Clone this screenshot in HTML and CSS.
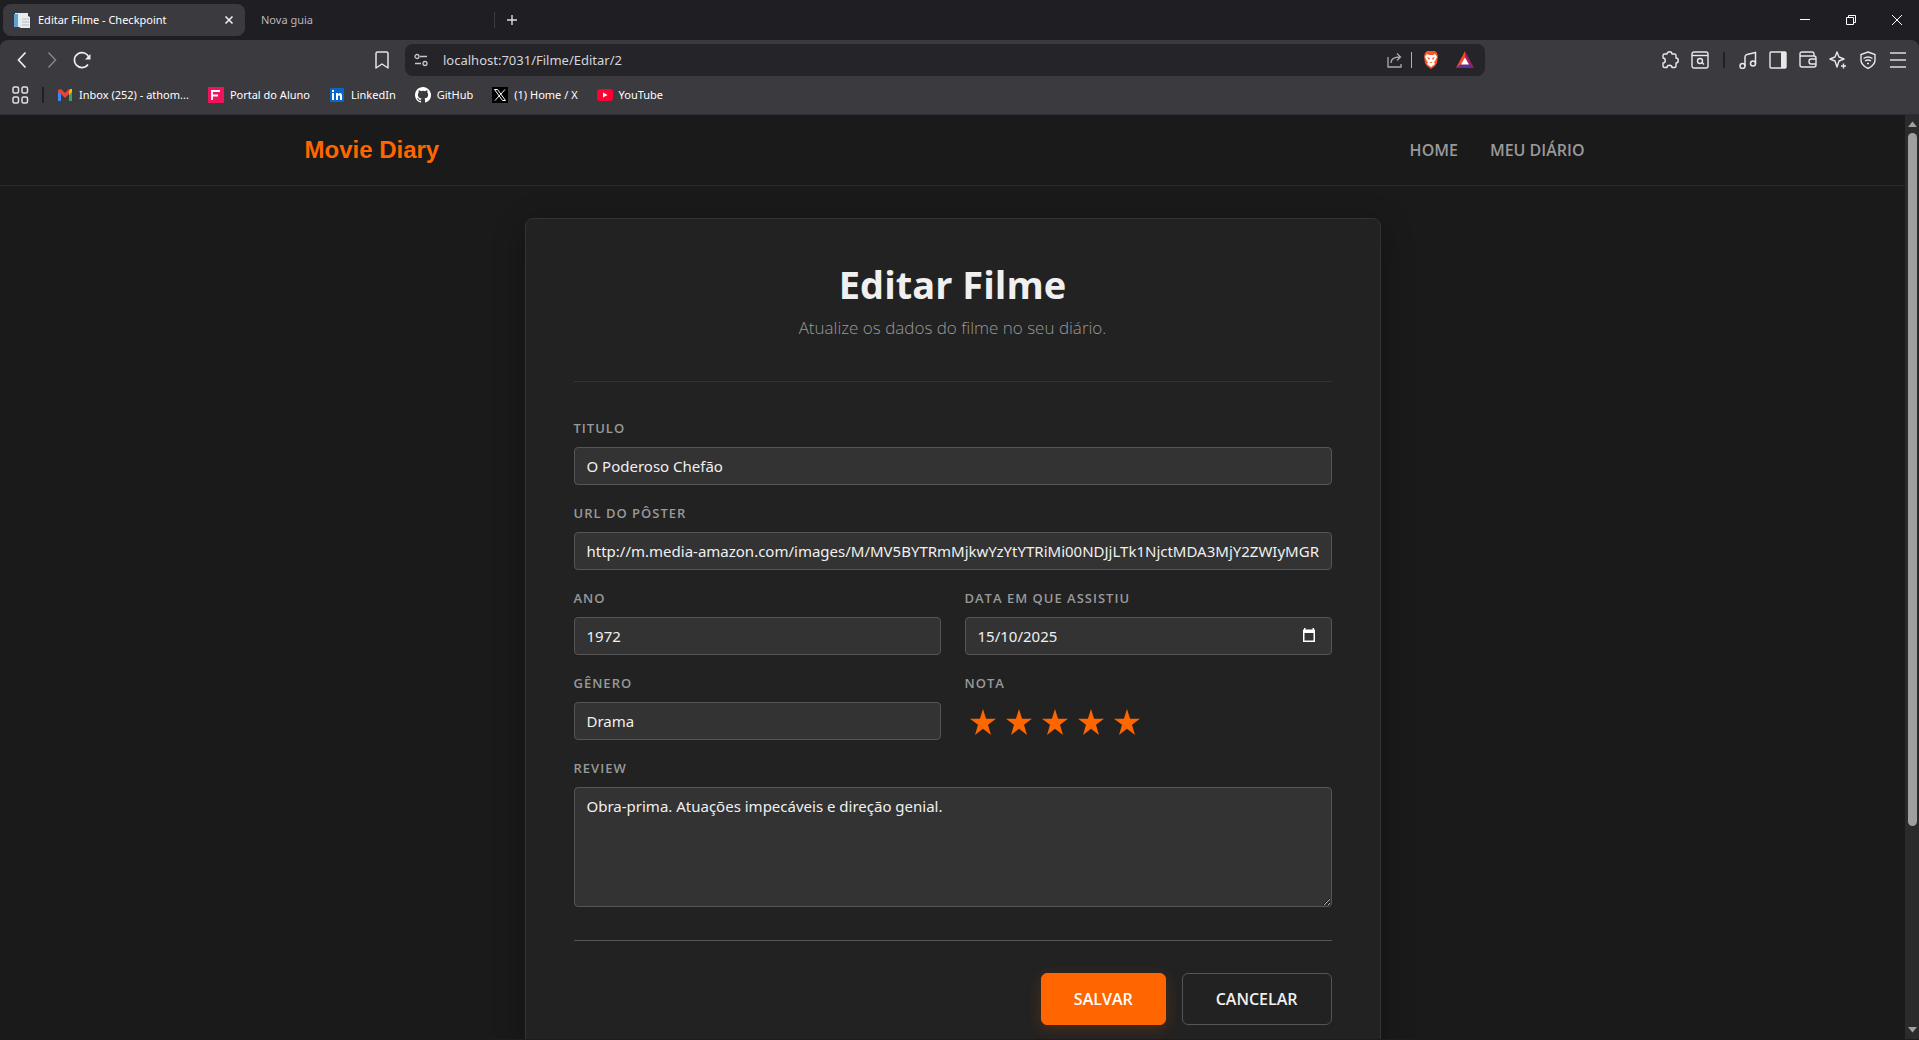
FILE: index.html
```html
<!DOCTYPE html>
<html lang="pt-BR">
<head>
<meta charset="utf-8">
<title>Editar Filme - Checkpoint</title>
<link rel="stylesheet" href="styles.css">
</head>
<body>
<div class="browser">
  <div class="tabstrip">
    <div class="tab tab-active">
      <svg class="icon16" viewBox="0 0 16 16"><path d="M1 1h9v14H1z" fill="#dfe9f2"/><path d="M0 2h4v13H0z" fill="#5fa3d3"/><path d="M5 1h9v3l2 1v11H7l-2-1z" fill="#e9ecef"/><path d="M8 7h7M8 10h7M8 13h7" stroke="#b6bec6"/></svg>
      <span class="tab-title">Editar Filme - Checkpoint</span>
      <button class="bare" aria-label="Fechar guia"><svg class="icon16" viewBox="0 0 16 16"><path d="M4.500 4.500l7 7M11.500 4.500l-7 7" stroke="#eee" stroke-width="1.600"/></svg></button>
    </div>
    <div class="tab tab-idle"><span class="tab-title">Nova guia</span></div>
    <button class="bare new-tab" aria-label="Nova guia"><svg class="icon16" viewBox="0 0 16 16"><path d="M8 3v10M3 8h10" stroke="#ddd" stroke-width="1.400"/></svg></button>
    <div class="window-controls">
      <button class="bare" aria-label="Minimizar"><svg class="icon16" viewBox="0 0 16 16"><path d="M3 7.500h10" stroke="#fff"/></svg></button>
      <button class="bare" aria-label="Restaurar"><svg class="icon16" viewBox="0 0 16 16" fill="none" stroke="#fff"><path d="M3.500 5.500h7v7h-7zM5.500 5.500v-2h7v7h-2"/></svg></button>
      <button class="bare" aria-label="Fechar"><svg class="icon16" viewBox="0 0 16 16"><path d="M3 3l10 10M13 3L3 13" stroke="#fff"/></svg></button>
    </div>
  </div>
  <div class="toolbar">
    <div class="nav-buttons">
      <button class="bare" aria-label="Voltar"><svg class="icon18" viewBox="0 0 18 18" fill="none" stroke="#eee" stroke-width="1.700"><path d="M12.500 1.500L5.500 9l7 7.500"/></svg></button>
      <button class="bare" aria-label="Avançar"><svg class="icon18" viewBox="0 0 18 18" fill="none" stroke="#858489" stroke-width="1.500"><path d="M5.500 1.500l7 7.500-7 7.500"/></svg></button>
      <button class="bare" aria-label="Recarregar"><svg class="icon18" viewBox="0 0 18 18" fill="none" stroke="#eee" stroke-width="1.700"><path d="M15 13.500A7.500 7.500 0 1 1 16 6.500"/><path d="M17.500 3v5.500H12z" fill="#eee" stroke="none"/></svg></button>
    </div>
    <div class="location">
      <button class="bare" aria-label="Favoritar"><svg class="icon18" viewBox="0 0 18 18" fill="none" stroke="#e5e5e8" stroke-width="1.500" stroke-linejoin="round"><path d="M3 2.500Q3 1 4.500 1h9Q15 1 15 2.500V17l-6-4-6 4z"/></svg></button>
      <div class="address">
        <svg class="icon16" viewBox="0 0 16 16" fill="none" stroke="#c5c5ca" stroke-width="1.300"><circle cx="4" cy="4.500" r="2"/><path d="M7 4.500h7M2 11.500h6"/><circle cx="12" cy="11.500" r="2"/></svg>
        <input class="url" type="text" aria-label="Endereço" value="localhost:7031/Filme/Editar/2">
        <svg class="icon16 share" viewBox="0 0 16 16" fill="none" stroke="#aaaab0" stroke-width="1.300"><path d="M1 5v10h13v-3M4 11c0-4 3-6 9-6M10 1.500L13.500 5 10 8.500"/></svg>
        <span class="address-rule"></span>
        <svg class="icon18 brave" viewBox="0 0 18 18"><path d="M5 0h8l2 2 1 3-1 7-2 3-4 3-4-3-2-3-1-7 1-3z" fill="#fb542b"/><path d="M5 3l2 1h4l2-1 2 3-2 4-1 1 1 2-4 3-4-3 1-2-1-1-2-4z" fill="#fff"/><path d="M5 6l3 1-1 2zM13 6l-3 1 1 2zM7 11h4l-2 1z" fill="#fb542b"/></svg>
        <svg class="icon18" viewBox="0 0 18 18"><path d="M9 0L0 17l5-3 4-7z" fill="#ff4724"/><path d="M9 0l9 17-5-3-4-7z" fill="#9e1f63"/><path d="M0 17h18l-5-4H5z" fill="#662d91"/><path d="M9 6.500L5 13.500h8z" fill="#fff"/></svg>
      </div>
    </div>
    <div class="tools">
      <button class="bare" aria-label="Extensões"><svg class="icon18" viewBox="0 0 18 18" fill="none" stroke="#e8e8ea" stroke-width="1.400" stroke-linejoin="round"><path d="M3.500 3H6c0-3 5-3 5 0h2.500q1.500 0 1.500 1.500V7c3 0 3 5 0 5v3q0 1.500-1.500 1.500H11c0-3-5-3-5 0H3.500Q2 16.500 2 15v-3c3 0 3-5 0-5V4.500Q2 3 3.500 3z"/></svg></button>
      <button class="bare" aria-label="Pesquisar guias"><svg class="icon18" viewBox="0 0 18 18" fill="none" stroke="#e8e8ea" stroke-width="1.400"><rect x="1" y="1" width="16" height="16" rx="2"/><path d="M1 4.500h16"/><circle cx="9" cy="10" r="2.500"/><path d="M11 11.500l2 2"/></svg></button>
      <span class="tool-rule"></span>
      <button class="bare" aria-label="Mídia"><svg class="icon18" viewBox="0 0 18 18" fill="none" stroke="#e8e8ea" stroke-width="1.500"><circle cx="3.500" cy="15" r="2.500"/><circle cx="14" cy="12.500" r="2.500"/><path d="M6 15V6q0-2 2-2.500l8.500-2v11"/></svg></button>
      <button class="bare" aria-label="Barra lateral"><svg class="icon18" viewBox="0 0 18 18"><rect x="1" y="1" width="16" height="16" rx="1" fill="none" stroke="#e8e8ea" stroke-width="1.400"/><path d="M12 1h5v16h-5z" fill="#e8e8ea"/></svg></button>
      <button class="bare" aria-label="Carteira"><svg class="icon18" viewBox="0 0 18 18" fill="none" stroke="#e8e8ea" stroke-width="1.400"><path d="M15 5V3q0-2-2-2H3Q1 1 1 3v11q0 2 2 2h12q2 0 2-2V7q0-2-2-2H1M17 8h-5q-2 0-2 2.500T12 13h5z"/></svg></button>
      <button class="bare" aria-label="Leo"><svg class="icon18" viewBox="0 0 18 18" fill="none" stroke="#e8e8ea" stroke-width="1.400" stroke-linejoin="round"><path d="M8 1l2 5 5 2-5 2-2 6-2-6-5-2 5-2z"/><path d="M14.500 12.500v5M12 15h5"/></svg></button>
      <button class="bare" aria-label="VPN"><svg class="icon18" viewBox="0 0 18 18" fill="none" stroke="#e8e8ea" stroke-width="1.400"><path d="M9 1l7 2.500V9c0 4-3 6.500-7 8.500C5 15.500 2 13 2 9V3.500z"/><path d="M4.500 7.500q4.500-3 9 0M6 10q3-2 6 0M8 12.500h2"/></svg></button>
      <button class="bare" aria-label="Menu"><svg class="icon18" viewBox="0 0 18 18" stroke="#b4b4b8" stroke-width="2"><path d="M1 2h16M1 9h16M1 16h16"/></svg></button>
    </div>
  </div>
  <div class="bookmarks">
    <button class="bare" aria-label="Grupos de guias"><svg class="icon18" viewBox="0 0 18 18" fill="none" stroke="#e0e0e3" stroke-width="1.500"><rect x="2" y="1" width="5.500" height="6" rx="1.500"/><rect x="11" y="1" width="5.500" height="6" rx="1.500"/><rect x="2" y="11" width="5.500" height="6" rx="1.500"/><rect x="11" y="11" width="5.500" height="6" rx="1.500"/></svg></button>
    <span class="bookmark-rule"></span>
    <a class="bookmark" href="#"><svg class="icon16" viewBox="0 0 16 16"><path d="M1 4v10h3V7z" fill="#4285f4"/><path d="M12 7v7h3V4z" fill="#34a853"/><path d="M1 3l3-1 4 4 4-4v5l-4 4-4-4-3-2z" fill="#ea4335"/><path d="M12 4l1-2h2v3l-3 3z" fill="#fbbc04"/></svg>Inbox (252) - athom...</a>
    <a class="bookmark" href="#"><svg class="icon16" viewBox="0 0 16 16"><path d="M0 0h16v16H0z" fill="#ed145b"/><path d="M4 13V4h8M4 8.500h6" fill="none" stroke="#fff" stroke-width="1.800"/></svg>Portal do Aluno</a>
    <a class="bookmark" href="#"><svg class="icon16" viewBox="0 0 16 16"><rect x="1" y="1" width="14" height="14" rx="1" fill="#0a66c2"/><path d="M3 6h2v7H3zM3 3h2v2H3zM7 6h2v1q4-2.500 4 2v4h-2V9q-2-2-2 1v3H7z" fill="#fff"/></svg>LinkedIn</a>
    <a class="bookmark" href="#"><svg class="icon16" viewBox="0 0 16 16"><path fill="#fff" d="M8 0C3.580 0 0 3.580 0 8c0 3.540 2.290 6.530 5.470 7.590.4.070.55-.17.55-.38v-1.490c-2.010.37-2.530-.49-2.690-.94-.09-.23-.48-.94-.82-1.130-.28-.15-.68-.52-.01-.53.63-.01 1.080.58 1.230.82.72 1.210 1.870.87 2.330.66.07-.52.28-.87.51-1.070-1.780-.2-3.640-.89-3.640-3.950 0-.87.31-1.590.82-2.150-.08-.2-.36-1.020.08-2.120 0 0 .67-.21 2.200.82a7.600 7.600 0 0 1 4 0c1.530-1.040 2.200-.82 2.200-.82.44 1.100.16 1.920.08 2.120.51.56.82 1.270.82 2.150 0 3.070-1.870 3.750-3.650 3.950.29.25.54.73.54 1.480v2.200c0 .21.15.46.55.38A8 8 0 0 0 8 0z"/></svg>GitHub</a>
    <a class="bookmark" href="#"><svg class="icon16" viewBox="0 0 16 16"><path d="M0 0h16v16H0z" fill="#000"/><path d="M2.500 2.500h3l8 11h-3zM13 2.500l-10 11" fill="none" stroke="#fff"/></svg>(1) Home / X</a>
    <a class="bookmark" href="#"><svg class="icon16" viewBox="0 0 16 16"><rect y="2" width="16" height="12" rx="3" fill="#f03"/><path d="M6 5.500v5L10.500 8z" fill="#fff"/></svg>YouTube</a>
  </div>

  <div class="viewport">
    <div class="page">
      <header class="site-header">
        <nav class="container site-nav">
          <a class="brand" href="#">Movie Diary</a>
          <div class="links"><a href="#">HOME</a><a href="#">MEU DIÁRIO</a></div>
        </nav>
      </header>
      <main class="container">
        <section class="card">
          <div class="card-head">
            <h1>Editar Filme</h1>
            <p>Atualize os dados do filme no seu diário.</p>
          </div>
          <form class="form">
            <div class="field wide"><label for="titulo">TITULO</label><input id="titulo" type="text" value="O Poderoso Chefão"></div>
            <div class="field wide"><label for="poster">URL DO PÔSTER</label><input id="poster" type="text" value="http://m.media-amazon.com/images/M/MV5BYTRmMjkwYzYtYTRiMi00NDJjLTk1NjctMDA3MjY2ZWIyMGRkXkEyXkFqcGc@._V1_.jpg"></div>
            <div class="field"><label for="ano">ANO</label><input id="ano" type="text" value="1972"></div>
            <div class="field"><label for="data">DATA EM QUE ASSISTIU</label>
              <div class="date-box"><input id="data" type="text" value="15/10/2025"><button class="bare" type="button" aria-label="Abrir calendário"><svg class="icon16" viewBox="0 0 16 16"><path fill="#fff" d="M3 1h1.500v1.500h7V1H13v1.500h1V15H2V2.500h1zM3.500 6v7.500h9V6z"/></svg></button></div>
            </div>
            <div class="field"><label for="genero">GÊNERO</label><input id="genero" type="text" value="Drama"></div>
            <fieldset class="field rating"><legend>NOTA</legend>
              <div class="stars">
                <label class="star"><input type="radio" name="nota" value="1" aria-label="1 estrela"><svg viewBox="0 0 26 26"><path d="M13 0l3.100 9.800H26l-8 6L21 26l-8-6.200L5 26l3-10.200-8-6h9.900z"/></svg></label>
                <label class="star"><input type="radio" name="nota" value="2" aria-label="2 estrelas"><svg viewBox="0 0 26 26"><path d="M13 0l3.100 9.800H26l-8 6L21 26l-8-6.200L5 26l3-10.200-8-6h9.900z"/></svg></label>
                <label class="star"><input type="radio" name="nota" value="3" aria-label="3 estrelas"><svg viewBox="0 0 26 26"><path d="M13 0l3.100 9.800H26l-8 6L21 26l-8-6.200L5 26l3-10.200-8-6h9.900z"/></svg></label>
                <label class="star"><input type="radio" name="nota" value="4" aria-label="4 estrelas"><svg viewBox="0 0 26 26"><path d="M13 0l3.100 9.800H26l-8 6L21 26l-8-6.200L5 26l3-10.200-8-6h9.900z"/></svg></label>
                <label class="star"><input type="radio" name="nota" value="5" aria-label="5 estrelas" checked><svg viewBox="0 0 26 26"><path d="M13 0l3.100 9.800H26l-8 6L21 26l-8-6.200L5 26l3-10.200-8-6h9.900z"/></svg></label>
              </div>
            </fieldset>
            <div class="field wide"><label for="review">REVIEW</label><textarea id="review">Obra-prima. Atuações impecáveis e direção genial.</textarea></div>
            <div class="actions wide"><button class="btn btn-primary" type="button">SALVAR</button><button class="btn btn-outline" type="button">CANCELAR</button></div>
          </form>
        </section>
      </main>
    </div>
    <div class="scrollbar">
      <svg viewBox="0 0 14 18"><path d="M3 12h9L7.500 6.500z" fill="#a0a0a0"/></svg>
      <div class="track"><div class="thumb"></div></div>
      <svg viewBox="0 0 14 18"><path d="M3 6h9l-4.500 5.500z" fill="#a0a0a0"/></svg>
    </div>
  </div>
</div>
</body>
</html>
```
FILE: styles.css
```css
*, *::before, *::after { box-sizing: border-box; }
body { margin: 0; background: #1a1a1a; color: #f0f0f0; font: 16px/24px "Open Sans", "Noto Sans", sans-serif; }
svg { display: block; flex: none; }
.icon16 { width: 16px; height: 16px; }
.icon18 { width: 18px; height: 18px; }
.bare { padding: 0; border: 0; background: none; flex: none; }
a { text-decoration: none; color: inherit; }

/* Browser frame */
.browser { height: 100vh; display: flex; flex-direction: column; background: #1f1e23; }
.tabstrip { height: 40px; flex: none; display: flex; align-items: center; padding: 0 14px 0 3px; font: 11px/16px "Noto Sans", sans-serif; }
.tab { height: 32px; display: flex; align-items: center; gap: 8px; }
.tab-active { width: 242px; padding: 0 8px 0 11px; border-radius: 8px; background: #3b3a3f; color: #fff; }
.tab-active .tab-title { flex: 1; }
.tab-idle { width: 250px; height: 16px; padding-left: 16px; border-right: 1px solid #3b3a3f; color: #b9b8bd; }
.new-tab { margin-left: 9px; }
.window-controls { margin-left: auto; display: flex; gap: 30px; }
.toolbar { height: 40px; flex: none; display: flex; align-items: center; padding: 0 12px 0 13px; background: #3b3a3f; border-radius: 8px 8px 0 0; }
.nav-buttons { flex: 0 1 360px; display: flex; gap: 12px; }
.location { flex: 0 0 1112px; display: flex; align-items: center; gap: 14px; }
.address { flex: 1; height: 32px; display: flex; align-items: center; padding: 0 11px 0 8px; border-radius: 8px; background: #252429; }
.url { flex: 1; min-width: 0; margin-left: 14px; padding: 0; border: 0; background: none; color: #d6d6da; font: 13px/20px "Noto Sans", sans-serif; }
.address-rule { width: 1px; height: 16px; margin: 0 10px 0 8px; background: #b0b0b4; }
.brave { margin-right: 16px; }
.tools { flex: 1; display: flex; justify-content: flex-end; align-items: center; gap: 12px; }
.tool-rule, .bookmark-rule { width: 2px; height: 16px; background: #212025; }
.tool-rule { margin: 0 2px; }
.bookmarks { height: 35px; flex: none; display: flex; align-items: center; padding: 0 11px 5px; gap: 19px; background: #3b3a3f; border-bottom: 1px solid #2e2d33; font: 11px/16px "Noto Sans", sans-serif; color: #fff; }
.bookmark { display: flex; align-items: center; gap: 6px; }
.bookmark-rule { margin: 0 -6px; }

/* Page area with its scrollbar */
.viewport { flex: 1; min-height: 0; display: flex; overflow: hidden; background: #1a1a1a; border-bottom: 1px solid #1f1a1e; }
.page { flex: 1; min-width: 0; overflow: hidden; }
.scrollbar { width: 14px; flex: none; display: flex; flex-direction: column; background: #2b2b2b; }
.track { flex: 1; padding: 0 2px 0 3px; }
.thumb { height: 78%; border-radius: 5px; background: #9f9f9f; }

.container { width: 100%; max-width: 1320px; margin: 0 auto; padding: 0 12px; }
.site-header { border-bottom: 1px solid #2a2a2a; margin-bottom: 32px; }
.site-nav { height: 70px; display: flex; align-items: center; justify-content: space-between; }
.brand { color: #ff6600; font: bold 24px/36px "Liberation Sans", Arial, sans-serif; }
.links { display: flex; gap: 32px; padding-right: 16px; color: #999; font-size: 16px; font-weight: 600; }

.card { width: 856px; max-width: 100%; margin: 0 auto; padding: 40px 48px; border: 1px solid #333; border-radius: 8px; background: #222; box-shadow: 0 8px 32px rgba(0, 0, 0, .3); }
.card-head { padding-bottom: 40px; border-bottom: 1px solid #333; text-align: center; }
h1 { margin: 0 0 6px; font-size: 38px; line-height: 50px; font-weight: 700; }
.card-head p { margin: 0; color: #999; font-size: 17px; line-height: 26px; font-weight: 300; }

.form { display: grid; grid-template-columns: 1fr 1fr; gap: 16px 24px; padding-top: 34px; }
.field { min-width: 0; display: flex; flex-direction: column; gap: 6px; margin: 0; padding: 0; border: 0; }
.wide { grid-column: 1 / -1; }
.field > label, legend { color: #999; font-size: 13px; line-height: 25px; font-weight: 600; letter-spacing: 1px; }
legend { padding: 0; margin-bottom: 6px; }
.field input[type="text"], textarea { width: 100%; padding: 6px 12px; border: 1px solid #555; border-radius: 4px; background: #333; color: #f0f0f0; font: 15px/24px "Noto Sans", "Open Sans", sans-serif; }
.field input[type="text"] { height: 38px; }
textarea { height: 120px; display: block; resize: vertical; }
.date-box { position: relative; }
.date-box .bare { position: absolute; right: 15px; top: 10px; }
.stars { display: flex; gap: 10px; padding: 7px 5px 0; }
.star { position: relative; width: 26px; height: 26px; }
.star input { position: absolute; inset: 0; margin: 0; opacity: 0; }
.star svg { width: 26px; height: 26px; fill: #ff6600; }
.actions { display: flex; justify-content: flex-end; gap: 16px; margin-top: 17px; padding-top: 32px; border-top: 1px solid #555; }
.btn { height: 52px; padding: 0 33px; border: 1px solid #555; border-radius: 6px; background: transparent; color: #f0f0f0; font: 600 16px/24px "Open Sans", "Noto Sans", sans-serif; }
.btn-primary { padding: 0 32px; border-color: #ff6600; background: #ff6600; color: #fff; box-shadow: 0 4px 15px rgba(255, 102, 0, .2); }
```
